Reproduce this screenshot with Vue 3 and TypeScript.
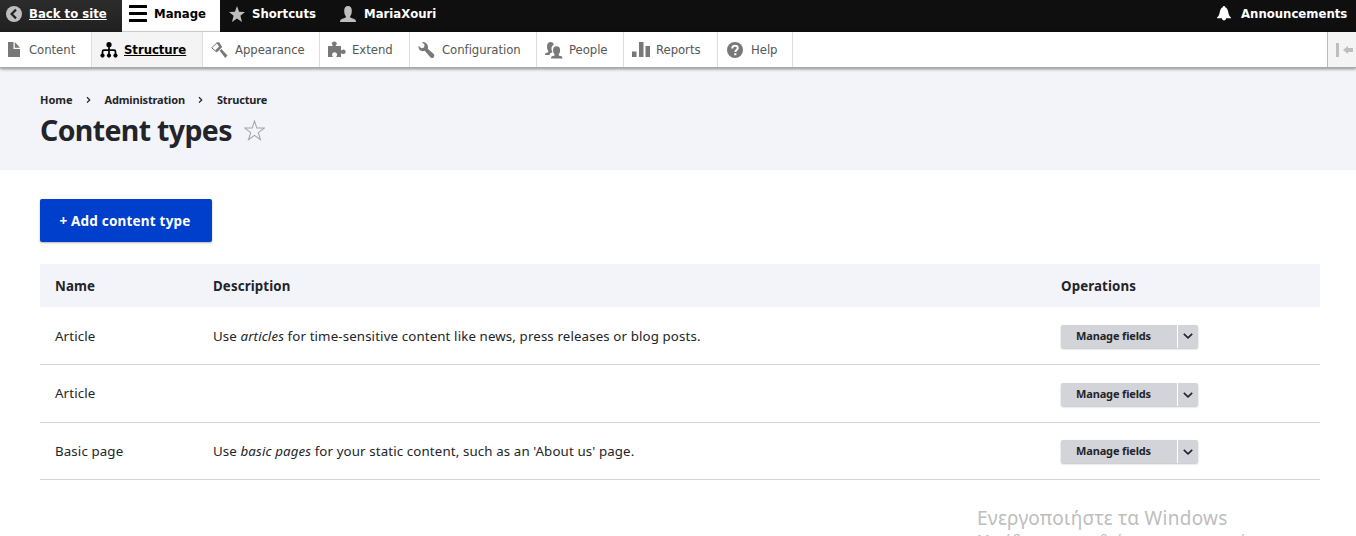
<script setup lang="ts">
interface Tab { label: string; icon: string; width: number; active?: boolean }
const tabs: Tab[] = [
  { label: 'Content', icon: 'file', width: 92 },
  { label: 'Structure', icon: 'tree', width: 111, active: true },
  { label: 'Appearance', icon: 'brush', width: 117 },
  { label: 'Extend', icon: 'puzzle', width: 90 },
  { label: 'Configuration', icon: 'wrench', width: 127 },
  { label: 'People', icon: 'people', width: 87 },
  { label: 'Reports', icon: 'bars', width: 94 },
  { label: 'Help', icon: 'help', width: 75 },
]
const crumbs: string[] = ['Home', 'Administration', 'Structure']
interface Row { name: string; before?: string; em?: string; after?: string }
const rows: Row[] = [
  { name: 'Article', before: 'Use ', em: 'articles', after: ' for time-sensitive content like news, press releases or blog posts.' },
  { name: 'Article' },
  { name: 'Basic page', before: 'Use ', em: 'basic pages', after: " for your static content, such as an 'About us' page." },
]
</script>

<template>
  <div class="page">
    <nav class="bar">
      <a class="item back">
        <svg class="ico" viewBox="0 0 16 16"><circle cx="8" cy="8" r="8" fill="#bebebe" /><path d="M10 3.6 5.6 8 10 12.4" fill="none" stroke="#222" stroke-width="2.2" /></svg>
        <span class="under">Back to site</span>
      </a>
      <a class="item manage">
        <svg class="burger" viewBox="0 0 18 17"><path d="M1 1.5h16M1 8.5h16M1 15.5h16" stroke="#000" stroke-width="3" stroke-linecap="round" /></svg>
        <span>Manage</span>
      </a>
      <a class="item shortcuts">
        <svg class="ico" viewBox="0 0 16 16"><path d="M8 0 10.1 5.7 16 6 11.4 9.8 13 16 8 12.5 3 16 4.6 9.8 0 6 5.900 5.700Z" fill="#bebebe" /></svg>
        <span>Shortcuts</span>
      </a>
      <a class="item user">
        <svg class="ico" viewBox="0 0 16 16"><path d="M0 16c0-1.800.7-2.700 2.500-3.300l2.700-.9c.8-.3.9-1.200.3-2C4.500 8.500 4.200 6.700 4.200 4.600 4.200 1.700 5.500 0 8 0s3.800 1.700 3.800 4.600c0 2.100-.3 3.900-1.300 5.200-.6.800-.5 1.700.3 2l2.700.9c1.800.6 2.500 1.500 2.500 3.300Z" fill="#bebebe" /></svg>
        <span>MariaXouri</span>
      </a>
      <a class="item news">
        <svg class="bell" viewBox="0 0 14 15"><path d="M7 0c.7 0 1.100.5 1.200 1.200C10.200 2 10.900 4 11.300 6.200c.4 2.500 1 3.900 2.700 5.300v.8H0v-.8c1.700-1.400 2.300-2.800 2.700-5.300C3.100 4 3.800 2 5.800 1.200 5.900.5 6.300 0 7 0ZM4.800 12.300h4.400C8.900 13.900 8 14.500 7 14.500s-1.900-.6-2.200-2.200Z" fill="#fff" /></svg>
        <span>Announcements</span>
      </a>
    </nav>
    <nav class="tray">
      <a v-for="t in tabs" :key="t.label" class="tab" :class="[t.icon, { active: t.active }]" :style="{ width: t.width + 'px' }">
        <svg class="ico" viewBox="0 0 16 16" fill="#787878">
          <path v-if="t.icon === 'file'" d="M0 0h5.500v7H12v8H0ZM6.800 0 12 5.700H6.800Z" />
          <g v-else-if="t.icon === 'tree'" fill="#000">
            <path d="M9 4v9M2.500 13V9.800Q2.500 8.200 4 8.200h10Q15.500 8.200 15.500 9.800V13" fill="none" stroke="#000" stroke-width="1.700" />
            <circle cx="9" cy="2.700" r="2.600" /><circle cx="2.500" cy="13.600" r="2.100" /><circle cx="9" cy="13.600" r="2.100" /><circle cx="15.500" cy="13.600" r="2.100" />
          </g>
          <g v-else-if="t.icon === 'brush'">
            <path d="M.7 5.700 6.300.7l3.500 4.500-4.700 4.400Z" fill="none" stroke="#787878" stroke-width="1" />
            <path d="M5.300.8 8.200.3l3 4.800-5.300 5.100-1.600-1.900 3.900-3.700ZM8.700 8.700l1.700-1.700 6.100 6.500-2.300 2.500Z" />
          </g>
          <path v-else-if="t.icon === 'puzzle'" d="M0 4h4.500C5.600 4 3.800 2.600 3.800 1.600 3.800.5 4.900-.5 6.300-.5s2.500 1 2.500 2.100C8.800 2.600 7 4 8.100 4H13v4c0 1 1.300-.5 2.500-.5 1.100 0 2.200 1 2.200 2.300s-1.100 2.300-2.200 2.300c-1.200 0-2.500-1.500-2.500-.5V15H8.500c-1.100 0 .6-.9.6-2.300 0-1.500-1-2.500-2.500-2.500s-2.500 1-2.500 2.500c0 1.400 1.600 2.300.5 2.300H0Z" />
          <path v-else-if="t.icon === 'wrench'" d="M15.700 11.900 9.800 6.700C10.500 4.600 9.500 2 7.500.8 6.400.1 5.200 0 4.100.2l2.500 2.500-.6 2.800-2.800.7L.6 3.700C.2 5.500 1 7.500 2.400 8.500c1.400.9 3 .9 4.300.3l5.400 6.300c.9 1 2.500 1.200 3.400.3.900-.9 1.100-2.500.2-3.500Z" />
          <g v-else-if="t.icon === 'people'">
            <path d="M0 13c0-1.400.5-1.900 1.800-2.300 1.700-.5 2-.9 1.200-2C2 7.300 2 5.400 2.100 3.700 2.200 1.400 3.500 0 5.600 0c1.700 0 2.900 1 3.200 2.700C7 3.500 6.300 5 6.500 7c.1 1.300.4 2.400 1 3.300-1.700.6-2.700 1.100-3 2.700Z" />
            <path d="M6 16.500c0-1.500.5-2.100 1.900-2.500 1.900-.5 2.200-.9 1.400-2-.9-1.200-1.200-2.700-1.200-4 0-2.300 1.200-3.800 3.500-3.800s3.500 1.500 3.500 3.800c0 1.300-.2 2.800-1.100 4-.8 1.100-.5 1.500 1.600 2 1.400.4 1.900 1 1.900 2.500Z" />
          </g>
          <path v-else-if="t.icon === 'bars'" d="M0 9.500h4.500v5.500H0ZM7 0h4.500v15H7ZM13.500 4H18v11h-4.500Z" />
          <g v-else>
            <circle cx="9" cy="8" r="8" />
            <path d="M6.200 6.500C6.200 4.500 7.400 3.700 9 3.700s2.800.9 2.800 2.400C11.800 8 9.300 7.900 9.300 10" fill="none" stroke="#fff" stroke-width="2" /><path d="M8.200 11.200h2.200v2H8.200Z" fill="#fff" />
          </g>
        </svg>
        <span>{{ t.label }}</span>
      </a>
      <div class="toggle">
        <svg viewBox="0 0 18 14"><path d="M0 0h3v14H0ZM7 7l5-4v2h5v4h-5v2Z" fill="#bebebe" /></svg>
      </div>
    </nav>
    <header class="head">
      <div class="crumbs">
        <template v-for="(c, i) in crumbs" :key="c">
          <svg v-if="i" class="sep" viewBox="0 0 5 8"><path d="m1 1.200 2.700 2.700L1 6.600" fill="none" stroke="#232429" stroke-width="1.300" /></svg>
          <a :class="{ long: i > 0 }">{{ c }}</a>
        </template>
      </div>
      <div class="title">
        <h1>Content types</h1>
        <svg class="star" viewBox="0 0 20 20"><path d="m10 1 2.250 6.700h7L13.600 12l2.100 6.800L10 14.700l-5.700 4.100L6.400 12 .8 7.700h7Z" fill="none" stroke="#a2a3a9" stroke-width="1" /></svg>
      </div>
    </header>
    <main>
      <button class="add">+ Add content type</button>
      <table>
        <thead><tr><th class="name">Name</th><th class="desc">Description</th><th>Operations</th></tr></thead>
        <tbody>
          <tr v-for="(r, i) in rows" :key="i" :class="'row' + i">
            <td>{{ r.name }}</td>
            <td>{{ r.before }}<em>{{ r.em }}</em>{{ r.after }}</td>
            <td class="ops">
              <div class="drop">
                <span class="main">Manage fields</span>
                <span class="arrow"><svg viewBox="0 0 10 6"><path d="m.8.8 4.200 4L9.200.8" fill="none" stroke="#222330" stroke-width="1.700" /></svg></span>
              </div>
            </td>
          </tr>
        </tbody>
      </table>
    </main>
    <div class="mark">
      <div class="big">Ενεργοποιήστε τα Windows</div>
      <div class="small">Μετάβαση στις ρυθμίσεις για ενεργοποίηση</div>
    </div>
  </div>
</template>

<style>
body { margin: 0; background: #fff; overflow: hidden; }
</style>
<style scoped>
* { box-sizing: border-box; }
.page { position: relative; width: 1356px; height: 536px; overflow: hidden; color: #232429; font: 13.300px "Noto Sans", sans-serif; }
.bar { display: flex; height: 32px; background: #0f0f0f; color: #fff; font: bold 13px/27px "DejaVu Sans Condensed", "DejaVu Sans", sans-serif; font-stretch: condensed; }
.item { display: flex; height: 32px; white-space: nowrap; }
.ico { width: 16px; height: 16px; flex: none; overflow: visible; }
.bar .ico { margin-top: 6px; }
.back { width: 122px; padding-left: 6px; gap: 7px; background: linear-gradient(#2c2c2c, #202020); }
.under { text-decoration: underline; }
.manage { width: 98px; padding-left: 7px; gap: 7px; background: #fff; color: #000; border-bottom: 1px solid #ddd; }
.burger { width: 18px; height: 17px; margin-top: 5px; }
.shortcuts { width: 111px; padding-left: 9px; gap: 7px; }
.user { padding-left: 9px; gap: 8px; }
.news { margin-left: auto; width: 139px; gap: 10px; }
.bell { width: 14px; height: 15px; margin-top: 6px; }
.tray { display: flex; height: 36px; background: #fff; border-bottom: 1px solid #aaa; box-shadow: 0 1px 3px rgba(0,0,0,.45); position: relative; color: #565656; font: 13px/35px "DejaVu Sans Condensed", "DejaVu Sans", sans-serif; font-stretch: condensed; letter-spacing: -.05px; }
.tab { display: flex; border-right: 1px solid #ddd; padding-left: 8px; gap: 8px; white-space: nowrap; }
.tab .ico { margin-top: 10px; }
.tab.file { gap: 5px; }
.tab.help { gap: 9px; }
.tab.active { background: #f4f4f4; color: #000; font-weight: bold; text-decoration: underline; }
.toggle { margin-left: auto; width: 29px; border-left: 1px solid #bbb; background: #f4f4f4; padding: 11px 0 0 8px; }
.toggle svg { display: block; width: 18px; height: 14px; }
.head { height: 102px; background: #f3f4f9; padding: 24px 40px 0; }
.crumbs { display: flex; align-items: center; height: 16px; font: bold 11px/16px "Noto Sans", sans-serif; }
.long { letter-spacing: -.17px; }
.sep { width: 5px; height: 8px; margin: 0 14px 0 13px; }
.title { display: flex; align-items: center; margin-top: 2px; }
h1 { margin: 0; font: bold 28.500px/40px "Noto Sans", sans-serif; letter-spacing: -.65px; }
.star { width: 21px; height: 21px; margin-left: 12px; }
main { padding: 29px 36px 0 40px; }
.add { display: block; width: 172px; height: 43px; padding: 0 2px 0 0; border: 0; border-radius: 2px; background: #003ecc; color: #fff; box-shadow: 0 1px 2px rgba(0,0,0,.3); font: bold 13.500px "Noto Sans", sans-serif; letter-spacing: .2px; }
table { width: 1280px; margin-top: 22px; border-collapse: separate; border-spacing: 0; table-layout: fixed; letter-spacing: .12px; }
th { height: 43px; padding: 0 0 0 15px; text-align: left; background: #f3f4f9; font-weight: bold; }
.name { width: 158px; }
.desc { width: 848px; }
td { height: 58px; padding: 1px 0 0 15px; border-bottom: 1px solid #d3d4d9; white-space: nowrap; }
.row1 td { padding: 0 0 1px 15px; }
.row1 td.ops { padding: 2px 0 0 15px; }
.row2 td { height: 57px; padding: 0 0 1px 15px; }
.row2 td.ops { padding: 1px 0 0 15px; }
.drop { display: flex; width: 137px; height: 23px; border-radius: 2px; overflow: hidden; background: #d3d4d9; box-shadow: 0 1px 2px rgba(0,0,0,.25); font: bold 11px/22px "Noto Sans", sans-serif; letter-spacing: -.15px; }
.main { width: 116px; padding-left: 15px; }
.arrow { display: flex; align-items: center; justify-content: center; width: 21px; padding-right: 1px; border-left: 1px solid #fff; }
.arrow svg { width: 10px; height: 6px; }
.mark { position: absolute; left: 977px; top: 504px; color: #bdbdbd; white-space: nowrap; font-family: "Noto Sans", sans-serif; }
.big { font-size: 19px; line-height: 28px; letter-spacing: .27px; }
.small { font-size: 14px; line-height: 15px; letter-spacing: .2px; }
</style>
